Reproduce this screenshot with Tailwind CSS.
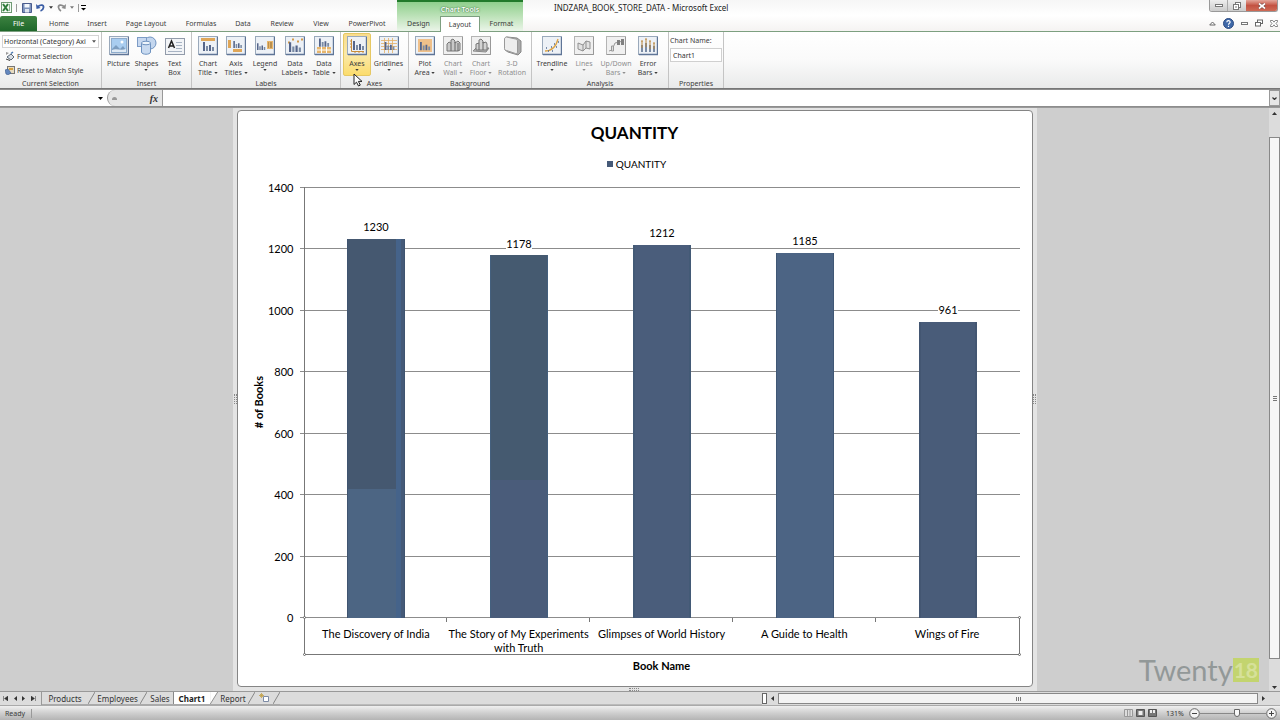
<!DOCTYPE html>
<html lang="en">
<head>
<meta charset="utf-8">
<meta name="viewport" content="width=device-width, initial-scale=1">
<title>INDZARA_BOOK_STORE_DATA - Microsoft Excel</title>
<script src="https://cdn.jsdelivr.net/npm/@tailwindcss/browser@4"></script>
</head>
<body class="flex h-screen flex-col overflow-hidden bg-[#cecece] font-['Noto_Sans','Open_Sans',sans-serif] text-[7px] leading-[9px] text-[#3c3c3c]">

<!-- Shared icon shapes -->
<svg class="hidden" aria-hidden="true">
  <defs>
    <linearGradient id="tile" x1="0" y1="0" x2="1" y2="1"><stop offset="0" stop-color="#fff"/><stop offset="1" stop-color="#dfe6ee"/></linearGradient>
    <linearGradient id="blue" x1="0" y1="0" x2="1" y2="1"><stop offset="0" stop-color="#eaf2fb"/><stop offset="1" stop-color="#7fa3d0"/></linearGradient>
  </defs>
  <symbol id="frame" viewBox="0 0 20 20"><rect x=".5" y=".5" width="19" height="18" fill="#edf1f6" stroke="#9aa9bb"/><path d="M1 18.500h18.500V1" fill="none" stroke="#5f7597" stroke-width="1.400"/></symbol>
  <symbol id="gframe" viewBox="0 0 20 20"><rect x=".5" y=".5" width="19" height="18" fill="#f0f0f0" stroke="#b4b4b4"/><path d="M1 18.500h18.500V1" fill="none" stroke="#999"/></symbol>
  <symbol id="bars" viewBox="0 0 12 9"><path d="M0 9V0h2v9zM6 9V3h2v6z" fill="#55658a"/><path d="M3 9V4h2v5zM9 9V5h2v4z" fill="#7a8ba5"/></symbol>
  <symbol id="caret" viewBox="0 0 5 3"><path d="M0 0h5L2.500 3z" fill="currentColor"/></symbol>
</svg>

<header class="flex h-8 shrink-0 border-b border-[#7d9f80] bg-linear-to-b from-[#f6f6f6] via-white to-[#f5f3f2]">
  <div class="flex w-[397px] shrink-0 flex-col justify-between">
    <!-- Quick access toolbar -->
    <div class="flex h-[15px] items-center gap-1 pl-px">
      <svg class="size-[11px]" viewBox="0 0 11 11"><rect x=".5" y=".5" width="10" height="10" fill="#f3faf3" stroke="#6f9a74"/><path d="M2 2l5 7M7 2L2 9" stroke="#2f7c3b" stroke-width="2"/><path d="M8.500 2v7" stroke="#8fb593"/></svg>
      <span class="h-2 w-px bg-[#999]"></span>
      <button aria-label="Save" class="ml-px"><svg class="size-[10px]" viewBox="0 0 10 10"><path d="M.5.5h9v9h-9z" fill="#7d93bd" stroke="#4b5c8c"/><path d="M2.500 1h5v3.500h-5z" fill="#f4f7fb"/><path d="M3 6h4v3.500H3z" fill="#dfe5ef"/></svg></button>
      <button aria-label="Undo" class="flex items-center gap-1 text-[#333]"><svg class="h-[9px] w-[9px]" viewBox="0 0 9 9"><path d="M2 3.500C5 1 8 2 7.500 4.500 7.200 6.500 6 7.500 4.500 8" fill="none" stroke="#3a5da5" stroke-width="1.700"/><path d="M0 1l.5 5L4.500 5z" fill="#3a5da5"/></svg><svg class="h-[3px] w-1"><use href="#caret"/></svg></button>
      <button aria-label="Redo" class="flex items-center gap-1 text-[#777]"><svg class="h-[9px] w-[9px]" viewBox="0 0 9 9"><path d="M7 3.500C4 1 1 2 1.500 4.500 1.700 6 2.500 7 4 8" fill="none" stroke="#8a8a8a" stroke-width="1.700"/><path d="M9 1l-.5 5L4.500 5z" fill="#8a8a8a"/></svg><svg class="h-[3px] w-1"><use href="#caret"/></svg></button>
      <span class="h-2 w-px bg-[#999]"></span>
      <button aria-label="Customize Quick Access Toolbar" class="-ml-[2px] text-black"><svg class="h-[6px] w-[5px]" viewBox="0 0 5 6"><path d="M0 .5h5" stroke="currentColor"/><path d="M0 3h5L2.500 5.500z" fill="currentColor"/></svg></button>
    </div>
    <nav class="flex h-[15px] text-center leading-[15px]">
      <button class="w-[37px] rounded-t-[2px] bg-linear-to-b from-[#3c8240] to-[#1e672a] text-white">File</button>
      <button class="w-11">Home</button>
      <button class="w-8">Insert</button>
      <button class="w-[66px]">Page Layout</button>
      <button class="w-11">Formulas</button>
      <button class="w-10">Data</button>
      <button class="w-[38px]">Review</button>
      <button class="w-10">View</button>
      <button class="w-[52px]">PowerPivot</button>
    </nav>
  </div>
  <!-- Contextual tab group -->
  <div class="-mb-px flex w-[126px] shrink-0 flex-col justify-between border-t-2 border-[#217a2b] bg-linear-to-b from-[#8fcf8d] via-[#bfe3bb] to-[#eef6ec]">
    <div class="pt-[3px] text-center font-semibold text-white [text-shadow:0_0_1px_#3e7a40,0_0_2px_#3e7a40]">Chart Tools</div>
    <nav class="flex h-4 text-center leading-[15px]">
      <button class="w-[43px] border-b border-[#7d9f80]">Design</button>
      <button class="w-10 border border-b-0 border-[#7d9f80] bg-white leading-[13px]">Layout</button>
      <button class="w-[43px] border-b border-[#7d9f80]">Format</button>
    </nav>
  </div>
  <h1 class="grow pt-[3px] pl-[31px] text-[8px] leading-[10px] text-[#222]">INDZARA_BOOK_STORE_DATA - Microsoft Excel</h1>
  <div class="flex flex-col items-end justify-between pr-[2px]">
    <div class="flex h-[12px] overflow-hidden rounded-b-[3px] border border-t-0 border-[#999]">
      <button aria-label="Minimize" class="flex w-[18px] items-center justify-center border-r border-[#aaa] bg-linear-to-b from-[#eee] to-[#ccc]"><svg class="h-[3px] w-2" viewBox="0 0 8 3"><rect x=".5" y=".5" width="7" height="2" fill="#fff" stroke="#777"/></svg></button>
      <button aria-label="Restore" class="flex w-[18px] items-center justify-center bg-linear-to-b from-[#eee] to-[#ccc]"><svg class="size-2" viewBox="0 0 8 8"><rect x="2.500" y=".5" width="5" height="5" fill="#fff" stroke="#777"/><rect x=".5" y="2.500" width="5" height="5" fill="#fff" stroke="#777"/><path d="M2 4.500h2v1H2z" fill="#777"/></svg></button>
      <button aria-label="Close" class="flex w-[31px] items-center justify-center bg-linear-to-b from-[#e3a79c] via-[#c35242] to-[#cf6a55]"><svg class="h-[6px] w-2" viewBox="0 0 8 6"><path d="M1 .5l6 5M7 .5l-6 5" stroke="#7a4a44" stroke-width="3"/><path d="M1 .5l6 5M7 .5l-6 5" stroke="#fff" stroke-width="1.700"/></svg></button>
    </div>
    <div class="flex h-4 items-center gap-[7px]">
      <button aria-label="Minimize the Ribbon"><svg class="h-[5px] w-[7px]" viewBox="0 0 7 5"><path d="M.7 4L3.500 1l2.800 3z" fill="#fff" stroke="#666"/></svg></button>
      <button aria-label="Help"><svg class="size-[11px]" viewBox="0 0 11 11"><circle cx="5.500" cy="5.500" r="5" fill="#3f68a8" stroke="#2c4b80"/><path d="M3.800 4.200C3.900 2 7.300 2.200 7.100 4.300 7 5.300 5.500 5.300 5.500 6.800M5.500 7.700v1.200" fill="none" stroke="#fff" stroke-width="1.200"/></svg></button>
      <button aria-label="Minimize Window"><svg class="h-[3px] w-[7px]" viewBox="0 0 7 3"><rect x=".5" y=".5" width="6" height="2" fill="#fff" stroke="#777"/></svg></button>
      <button aria-label="Restore Window"><svg class="size-2" viewBox="0 0 8 8"><rect x="2.500" y="1" width="5" height="3.500" fill="#fff" stroke="#666"/><rect x=".5" y="3.500" width="5" height="3.500" fill="#fff" stroke="#666"/></svg></button>
      <button aria-label="Close Window"><svg class="h-[7px] w-2" viewBox="0 0 8 7"><path d="M.5.5h2.200L4 2.200 5.300.5h2.200v1.200L6 3.500l1.500 1.800v1.200H5.300L4 4.800 2.700 6.500H.5V5.300L2 3.500.5 1.700z" fill="#fff" stroke="#666" stroke-width=".8"/></svg></button>
    </div>
  </div>
</header>

<!-- Ribbon -->
<section class="flex h-[57px] shrink-0 border-b border-[#777] bg-linear-to-b from-white via-[#fafafa] to-[#e9eaea] text-center">
  <div class="flex w-[102px] flex-col justify-between border-r border-[#c4c4c4] pt-[3px]">
    <div class="flex flex-col gap-[2px] px-[2px] text-left">
      <div class="grid items-center">
        <select aria-label="Chart element" class="col-start-1 row-start-1 h-[13px] w-full appearance-none border border-[#d4d4d4] bg-white pl-px leading-[11px] text-[#333]"><option>Horizontal (Category) Axi</option></select>
        <svg class="pointer-events-none col-start-1 row-start-1 mr-[3px] h-[3px] w-1 justify-self-end text-[#555]"><use href="#caret"/></svg>
      </div>
      <button class="flex h-3 items-center gap-[2px] pl-[3px]"><svg class="size-[10px]" viewBox="0 0 10 10"><path d="M1 1l3 1-3 2z" fill="#999"/><path d="M2 6l4-3 3 3-3 3z" fill="#d8dee5" stroke="#596878"/><path d="M1 8l4 1.500" stroke="#444"/><path d="M6 2.500l2-1.500" stroke="#4676b0" stroke-width="1.500"/></svg>Format Selection</button>
      <button class="flex h-3 items-center gap-[2px] pl-[3px]"><svg class="size-[10px]" viewBox="0 0 10 10"><rect x="2.500" y="1.500" width="7" height="7" fill="#e8dcc0" stroke="#777"/><path d="M4 3h4v2H4z" fill="#d7a13e"/><path d="M0 5l3-1 3 4-3 2-2-1z" fill="#6387be" stroke="#3e5a8a" stroke-width=".6"/></svg>Reset to Match Style</button>
    </div>
    <div>Current Selection</div>
  </div>

  <div class="flex w-[90px] flex-col justify-between border-r border-[#c4c4c4] pt-1">
    <div class="flex justify-center">
      <button class="flex w-7 flex-col items-center gap-[3px]"><svg class="size-5" viewBox="0 0 20 20"><use href="#frame"/><rect x="2.500" y="2.500" width="15" height="14" fill="#a9cdf0" stroke="#8eaccc"/><circle cx="13" cy="6" r="1.500" fill="#fff"/><path d="M3 13l4-4 4 4 3-3 3 4v2H3z" fill="#7c9dc0"/><path d="M3 14c4-2 9 1 14-1v3H3z" fill="#dfeaf5"/></svg>Picture</button>
      <button class="flex w-7 flex-col items-center gap-[3px]"><svg class="size-5" viewBox="0 0 20 20"><circle cx="13" cy="7" r="6" fill="#c3d6ee" stroke="#6f93c0"/><rect x=".5" y="1.500" width="9" height="9" fill="#c8d9f0" stroke="#7d9cc6"/><path d="M4.500 7v9c0 3 9 3 9 0V7z" fill="#c8daf0" stroke="#6f93c0"/><ellipse cx="9" cy="7" rx="4.500" ry="1.800" fill="#eef5fc" stroke="#6f93c0"/></svg><span class="flex flex-col items-center gap-px">Shapes<svg class="h-[2px] w-1"><use href="#caret"/></svg></span></button>
      <button class="flex w-7 flex-col items-center gap-[3px]"><svg class="size-5" viewBox="0 0 20 20"><rect x=".5" y="2.500" width="19" height="16" fill="#f2f4f7" stroke="#929baa"/><path d="M3.500 12L6.500 5l3 7M4.500 10h4" fill="none" stroke="#222" stroke-width="1.500"/><path d="M11 6.500h6M11 9.500h6M11 12.500h6M3 15.500h14" stroke="#a8b4c4"/></svg><span>Text<br>Box</span></button>
    </div>
    <div>Insert</div>
  </div>

  <div class="flex w-[149px] flex-col justify-between border-r border-[#c4c4c4] pt-1">
    <div class="flex justify-center">
      <button class="flex w-7 flex-col items-center gap-[3px]"><svg class="size-5" viewBox="0 0 20 20"><use href="#frame"/><path d="M3 2h14v3H3z" fill="#dfa658"/><use href="#bars" x="5" y="6" width="12" height="9"/></svg><span class="whitespace-nowrap">Chart<br>Title <svg class="inline h-[2px] w-1"><use href="#caret"/></svg></span></button>
      <button class="flex w-7 flex-col items-center gap-[3px]"><svg class="size-5" viewBox="0 0 20 20"><use href="#frame"/><path d="M2 4h3v8H2zM7 13h9v3H7z" fill="#dfa658"/><use href="#bars" x="7" y="5" width="10" height="7"/></svg><span class="whitespace-nowrap">Axis<br>Titles <svg class="inline h-[2px] w-1"><use href="#caret"/></svg></span></button>
      <button class="flex w-[30px] flex-col items-center gap-[3px]"><svg class="size-5" viewBox="0 0 20 20"><use href="#frame"/><path d="M12 5h6v8h-6z" fill="#e8b66c"/><path d="M13 7h1M15 7h2M13 9h1M15 9h2M13 11h1M15 11h2" stroke="#8b6a35"/><use href="#bars" x="2" y="7" width="9" height="7"/></svg><span class="flex flex-col items-center gap-px">Legend<svg class="h-[2px] w-1"><use href="#caret"/></svg></span></button>
      <button class="flex w-[30px] flex-col items-center gap-[3px]"><svg class="size-5" viewBox="0 0 20 20"><use href="#frame"/><path d="M3 6.500h2M7 3.500h2M12 5.500h2M16 3.500h2" stroke="#d39a4a" stroke-width="2"/><use href="#bars" x="4" y="6" width="13" height="10"/></svg><span class="whitespace-nowrap">Data<br>Labels <svg class="inline h-[2px] w-1"><use href="#caret"/></svg></span></button>
      <button class="flex w-7 flex-col items-center gap-[3px]"><svg class="size-5" viewBox="0 0 20 20"><use href="#frame"/><use href="#bars" x="5" y="2" width="11" height="9"/><path d="M3 11h14v6H3z" fill="#e8b66c"/><path d="M3 14h14M7.500 11v6M12.500 11v6" stroke="#fff"/></svg><span class="whitespace-nowrap">Data<br>Table <svg class="inline h-[2px] w-1"><use href="#caret"/></svg></span></button>
    </div>
    <div>Labels</div>
  </div>

  <div class="flex w-[68px] flex-col justify-between border-r border-[#c4c4c4] pt-px">
    <div class="flex justify-center">
      <button class="flex h-[43px] w-7 flex-col items-center gap-[3px] rounded-[2px] border border-[#e6c863] bg-linear-to-b from-[#f9dc8c] via-[#fbe9a8] to-[#fbdc6c] pt-[2px]"><svg class="size-5" viewBox="0 0 20 20"><use href="#frame"/><path d="M4.500 3v12.500H17" fill="none" stroke="#c98d3a"/><path d="M3 5h1M3 8h1M3 11h1M8 16v1M12 16v1M16 16v1" stroke="#c98d3a"/><use href="#bars" x="6" y="5" width="12" height="9"/></svg><span class="flex flex-col items-center gap-px">Axes<svg class="h-[2px] w-1"><use href="#caret"/></svg></span></button>
      <button class="flex w-[35px] flex-col items-center gap-[3px] pt-[3px]"><svg class="size-5" viewBox="0 0 20 20"><use href="#frame"/><path d="M2 4.500h16M2 7.500h16M2 10.500h16M2 13.500h16M5.500 2v15M9.500 2v15M13.500 2v15" stroke="#e3b064" stroke-width=".8"/><use href="#bars" x="5" y="6" width="12" height="8"/></svg><span class="flex flex-col items-center gap-px">Gridlines<svg class="h-[2px] w-1"><use href="#caret"/></svg></span></button>
    </div>
    <div>Axes</div>
  </div>

  <div class="flex w-[123px] flex-col justify-between border-r border-[#c4c4c4] pt-1">
    <div class="flex justify-center">
      <button class="flex w-7 flex-col items-center gap-[3px]"><svg class="size-5" viewBox="0 0 20 20"><use href="#frame"/><path d="M3 3h14v13H3z" fill="#efc08a"/><use href="#bars" x="5" y="5" width="11" height="10"/></svg><span class="whitespace-nowrap">Plot<br>Area <svg class="inline h-[2px] w-1"><use href="#caret"/></svg></span></button>
      <button disabled class="flex w-7 flex-col items-center gap-[3px] text-[#8e8e8e]"><svg class="size-5" viewBox="0 0 20 20"><use href="#gframe"/><path d="M4 15V8l2-2 2 1V4l2-1 2 2v2l3-2 2 2v7l-2 1z" fill="#c9c9c9" stroke="#777"/><path d="M8 7v8M12 6v9M15 7v8" stroke="#666"/></svg><span class="whitespace-nowrap">Chart<br>Wall <svg class="inline h-[2px] w-1"><use href="#caret"/></svg></span></button>
      <button disabled class="flex w-7 flex-col items-center gap-[3px] text-[#8e8e8e]"><svg class="size-5" viewBox="0 0 20 20"><use href="#gframe"/><path d="M2 15l3-3h13l-3 4z" fill="#bbb" stroke="#888"/><path d="M5 14V8l3-1V4l2-1 2 2v2l3-1 1 2v6z" fill="#d3d3d3" stroke="#777"/><path d="M8 7v7M12 6v8" stroke="#666"/></svg><span class="whitespace-nowrap">Chart<br>Floor <svg class="inline h-[2px] w-1"><use href="#caret"/></svg></span></button>
      <button disabled class="flex w-[34px] flex-col items-center gap-[3px] text-[#8e8e8e]"><svg class="size-5" viewBox="0 0 20 20"><path d="M3 3c0-1 1-2 2-2l10 1 4 3v11l-3 3-10-3-3-2z" fill="#aaa" stroke="#888"/><path d="M2.500 3c0-1 1-2 2-2l9 2c1 0 2 1 2 2v11c0 1-1 2-2 1.500l-9-3c-1 0-2-1-2-2z" fill="#ededed" stroke="#999"/></svg><span>3-D<br>Rotation</span></button>
    </div>
    <div>Background</div>
  </div>

  <div class="flex w-[137px] flex-col justify-between border-r border-[#c4c4c4] pt-1">
    <div class="flex pl-[2px]">
      <button class="flex w-9 flex-col items-center gap-[3px]"><svg class="size-5" viewBox="0 0 20 20"><use href="#frame"/><path d="M3 15c7 0 11-4 13-12" fill="none" stroke="#dca548" stroke-width="1.300"/><path d="M4 12h1M6 15h1M9 11h1M10 15h1M12 8h1M14 11h1M16 6h1" stroke="#536b93" stroke-width="1.300"/></svg><span class="flex flex-col items-center gap-px">Trendline<svg class="h-[2px] w-1"><use href="#caret"/></svg></span></button>
      <button disabled class="flex w-7 flex-col items-center gap-[3px] text-[#8e8e8e]"><svg class="size-5" viewBox="0 0 20 20"><use href="#gframe"/><path d="M4 7l5 2 3-4 4 1v7l-4-1-3 3-5-2zM9 9v6M12 5v7" fill="#e2e2e2" stroke="#909090"/></svg><span class="flex flex-col items-center gap-px">Lines<svg class="h-[2px] w-1"><use href="#caret"/></svg></span></button>
      <button disabled class="flex w-9 flex-col items-center gap-[3px] text-[#8e8e8e]"><svg class="size-5" viewBox="0 0 20 20"><use href="#gframe"/><path d="M3 15l3-1 3-7 4-1 4-1" fill="none" stroke="#999"/><path d="M5.500 10h2v5h-2z" fill="#ddd" stroke="#999"/><path d="M11 4h3v5h-3zM15 3h3v6h-3z" fill="#808080"/></svg><span class="whitespace-nowrap">Up/Down<br>Bars <svg class="inline h-[2px] w-1"><use href="#caret"/></svg></span></button>
      <button class="flex w-7 flex-col items-center gap-[3px]"><svg class="size-5" viewBox="0 0 20 20"><use href="#frame"/><path d="M3 9h2v7H3zM7 7h2v9H7zM11 9h2v7h-2zM15 10h2v6h-2z" fill="#7a8ba5"/><path d="M4 5v7M3 5h2M8 3v8M7 3h2M12 5v8M11 5h2M16 7v6M15 7h2" stroke="#b9863c"/></svg><span class="whitespace-nowrap">Error<br>Bars <svg class="inline h-[2px] w-1"><use href="#caret"/></svg></span></button>
    </div>
    <div>Analysis</div>
  </div>

  <div class="flex w-[55px] flex-col justify-between border-r border-[#c4c4c4] pt-1">
    <div class="flex flex-col gap-[3px] pl-px text-left">
      <label for="chart-name">Chart Name:</label>
      <input id="chart-name" value="Chart1" class="h-[14px] w-[52px] border border-[#d0d0d0] bg-white pl-[2px] text-[#333]">
    </div>
    <div>Properties</div>
  </div>
</section>

<!-- Formula bar -->
<section class="flex h-[18px] shrink-0 border-y border-[#8d8d8d] bg-white">
  <div class="flex w-[107px] items-center justify-end bg-white pr-1 text-black">
    <input aria-label="Name box" class="w-24 min-w-0 bg-white"><svg class="h-[3px] w-[5px]"><use href="#caret"/></svg>
  </div>
  <div class="flex w-14 items-center justify-between rounded-l-full border-r border-l border-[#999] bg-[#e6e6e6] px-1">
    <span class="h-[3px] w-[5px] rounded-t-full bg-[#999]"></span>
    <button aria-label="Insert Function" class="font-['Liberation_Serif',serif] text-[10px] font-bold text-[#333] italic">fx</button>
  </div>
  <input aria-label="Formula bar" class="min-w-0 grow bg-white">
  <button aria-label="Expand Formula Bar" class="flex w-[11px] items-center justify-center border border-[#999] bg-[#e6e6e6]"><svg class="h-[3px] w-[5px]" viewBox="0 0 5 3"><path d="M.5.5l2 2 2-2" fill="none" stroke="#333" stroke-width="1.200"/></svg></button>
</section>

<!-- Workspace -->
<main class="flex min-h-0 grow border-t border-[#999]">
  <div class="flex min-w-0 grow justify-center bg-[#cecece]">
    <section class="flex w-[804px] border-x-4 border-b-4 border-[#e4e4e4] bg-[#e4e4e4] pt-[2px] font-[Lato,sans-serif] text-[11px] leading-[14px] text-black">
      <div class="relative flex w-full flex-col rounded-[4px] border border-[#858585] bg-white">
        <span class="absolute bottom-[-5px] left-[391px] h-[3px] w-[10px] border-y border-dotted border-[#888]"></span>
        <span class="absolute top-[283px] left-[-4px] h-[10px] w-[3px] border-x border-dotted border-[#888]"></span>
        <span class="absolute top-[283px] right-[-4px] h-[10px] w-[3px] border-x border-dotted border-[#888]"></span>

        <h2 class="pt-2 text-center text-[17px] leading-7 font-bold">QUANTITY</h2>
        <div class="mt-[10px] flex items-center justify-center gap-[3px] pl-1 text-[10px]"><span class="size-[6px] bg-[#465a78]"></span>QUANTITY</div>

        <div class="mt-[16px] mr-3 flex min-h-0 grow">
          <div class="flex w-[66px] shrink-0">
            <div class="flex w-7 items-center justify-end"><span class="rotate-180 font-bold [writing-mode:vertical-rl]"># of Books</span></div>
            <div class="flex w-7 flex-col justify-between text-right *:h-px *:leading-px">
              <div>1400</div><div>1200</div><div>1000</div><div>800</div><div>600</div><div>400</div><div>200</div><div>0</div>
            </div>
            <div class="ml-auto flex w-1 flex-col justify-between *:h-px *:bg-[#8c8c8c]">
              <i></i><i></i><i></i><i></i><i></i><i></i><i></i><i></i>
            </div>
          </div>
          <div class="grid min-w-0 grow border-l border-[#777]">
            <div class="col-start-1 row-start-1 flex flex-col justify-between *:h-px *:bg-[#8c8c8c]">
              <i></i><i></i><i></i><i></i><i></i><i></i><i></i><i></i>
            </div>
            <div class="col-start-1 row-start-1 grid grid-cols-5 text-center">
              <div class="flex flex-col items-center justify-end"><span class="mb-[5px] bg-white">1230</span><div class="flex w-2/5 border-x border-[#3f5470] bg-[#4c6583]" style="height:87.860%"><div class="h-[66%] grow bg-[#455870]"></div><div class="w-[5px] bg-[#45638a]"></div><div class="w-[3px] bg-[#455a78]"></div></div></div>
              <div class="flex flex-col items-center justify-end"><span class="mb-[5px] leading-[13px] bg-white">1178</span><div class="w-2/5 border-x border-[#44607e] bg-[#4a5c7a]" style="height:84.140%"><div class="h-[62%] bg-[#455a70]"></div></div></div>
              <div class="flex flex-col items-center justify-end"><span class="mb-[5px] bg-white">1212</span><div class="w-2/5 border-x-2 border-[#435a76] bg-[#4a5d7b]" style="height:86.570%"></div></div>
              <div class="flex flex-col items-center justify-end"><span class="mb-[5px] bg-white">1185</span><div class="w-2/5 border-x border-[#3f5775] bg-[#4c6484]" style="height:84.640%"></div></div>
              <div class="flex flex-col items-center justify-end"><span class="mb-[5px] bg-white">961</span><div class="w-2/5 border-x-2 border-[#435672] bg-[#495c79]" style="height:68.640%"></div></div>
            </div>
          </div>
        </div>

        <!-- Selected category axis -->
        <div class="relative mr-3 ml-[66px] grid h-[37px] grid-cols-5 border border-t-0 border-[#777] text-center *:pt-[9px]">
          <div class="bg-[linear-gradient(#777,#777)] bg-[length:1px_4px] bg-[top_right] bg-no-repeat">The Discovery of India</div>
          <div class="bg-[linear-gradient(#777,#777)] bg-[length:1px_4px] bg-[top_right] bg-no-repeat">The Story of My Experiments with Truth</div>
          <div class="bg-[linear-gradient(#777,#777)] bg-[length:1px_4px] bg-[top_right] bg-no-repeat">Glimpses of World History</div>
          <div class="bg-[linear-gradient(#777,#777)] bg-[length:1px_4px] bg-[top_right] bg-no-repeat">A Guide to Health</div>
          <div>Wings of Fire</div>
          <i class="absolute -top-[2px] -left-[2px] size-[3px] rounded-full border border-[#666] bg-white p-0!"></i>
          <i class="absolute -top-[2px] -right-[2px] size-[3px] rounded-full border border-[#666] bg-white p-0!"></i>
          <i class="absolute -bottom-[2px] -left-[2px] size-[3px] rounded-full border border-[#666] bg-white p-0!"></i>
          <i class="absolute -right-[2px] -bottom-[2px] size-[3px] rounded-full border border-[#666] bg-white p-0!"></i>
        </div>
        <div class="mr-3 ml-[66px] pt-1 pb-[13px] text-center font-bold">Book Name</div>
      </div>
    </section>
  </div>
  <!-- Vertical scroll bar -->
  <div class="flex w-[11px] shrink-0 flex-col items-center bg-[#dcdcdc]">
    <button aria-label="Scroll up" class="flex h-[29px] items-start pt-1"><svg class="h-[3px] w-[5px] rotate-180 text-[#333]"><use href="#caret"/></svg></button>
    <div class="flex w-full grow flex-col items-center justify-center gap-px border border-[#888] bg-[#f6f6f6] *:h-px *:w-1 *:bg-[#777]"><i></i><i></i><i></i></div>
    <button aria-label="Scroll down" class="flex h-[32px] items-end pb-[2px]"><svg class="h-[3px] w-[5px] text-[#333]"><use href="#caret"/></svg></button>
  </div>
</main>

<!-- Sheet tabs and horizontal scroll bar -->
<section class="flex h-[14px] shrink-0 items-center border-t border-[#999] bg-[#dcdcdc] text-[8px]">
  <div class="flex h-full w-[42px] items-center justify-around border-r border-[#999] pr-[2px]">
    <button aria-label="First sheet"><svg class="h-[5px] w-[5px]" viewBox="0 0 5 5"><path d="M.5 0v5M5 0v5L1.500 2.500z" fill="#333" stroke="#333" stroke-width=".5"/></svg></button>
    <button aria-label="Previous sheet"><svg class="h-[5px] w-[3px]" viewBox="0 0 3 5"><path d="M3 0v5L0 2.500z" fill="#333"/></svg></button>
    <button aria-label="Next sheet"><svg class="h-[5px] w-[3px]" viewBox="0 0 3 5"><path d="M0 0v5l3-2.500z" fill="#333"/></svg></button>
    <button aria-label="Last sheet"><svg class="h-[5px] w-[5px]" viewBox="0 0 5 5"><path d="M4.500 0v5M0 0v5l3.500-2.500z" fill="#333" stroke="#333" stroke-width=".5"/></svg></button>
  </div>
  <nav class="flex h-full items-center border-b border-[#aaa] text-center text-[#333]">
    <button class="w-[46px]">Products</button>
    <svg class="h-3 w-[7px]" viewBox="0 0 7 12"><path d="M0 12L7 0" stroke="#888"/></svg>
    <button class="w-[45px]">Employees</button>
    <svg class="h-3 w-[7px]" viewBox="0 0 7 12"><path d="M0 12L7 0" stroke="#888"/></svg>
    <button class="w-[26px]">Sales</button>
    <button class="h-full w-[37px] border-l border-[#888] bg-white font-bold text-[#222]">Chart1</button>
    <svg class="h-full w-[8px]" viewBox="0 0 8 13"><path d="M0 0h8L0 13z" fill="#fff"/><path d="M0 13L8 0" stroke="#888"/></svg>
    <button class="w-[30px]">Report</button>
    <svg class="h-3 w-[7px]" viewBox="0 0 7 12"><path d="M0 12L7 0" stroke="#888"/></svg>
    <button aria-label="Insert Worksheet" class="flex w-[18px] justify-center"><svg class="size-[10px]" viewBox="0 0 10 10"><path d="M4.500 3.500h5v5h-5z" fill="#fff" stroke="#7d8ba5"/><path d="M1 1l3 3M4 1L1 4M2.500 0v5M0 2.500h5" stroke="#c1a045" stroke-width=".8"/></svg></button>
    <svg class="h-3 w-[7px]" viewBox="0 0 7 12"><path d="M0 12L7 0" stroke="#888"/></svg>
  </nav>
  <div class="h-full grow border-b border-[#bbb]"></div>
  <div class="flex h-full w-[518px] items-center text-[#333]">
    <span class="h-[11px] w-[5px] border border-[#666] bg-white"></span>
    <button aria-label="Scroll left" class="ml-1"><svg class="h-[5px] w-[3px]" viewBox="0 0 3 5"><path d="M3 0v5L0 2.500z" fill="#333"/></svg></button>
    <div class="ml-1 flex h-[11px] grow items-center justify-center gap-px border border-[#888] bg-[#f4f4f4] *:h-1 *:w-px *:bg-[#777]"><i></i><i></i><i></i></div>
    <button aria-label="Scroll right" class="mr-[15px] ml-1"><svg class="h-[5px] w-[3px]" viewBox="0 0 3 5"><path d="M0 0v5l3-2.500z" fill="#333"/></svg></button>
  </div>
</section>

<!-- Status bar -->
<footer class="flex h-[15px] shrink-0 items-center border-t border-[#aaa] bg-linear-to-b from-[#f0f0f0] via-[#cfcfcf] to-[#b4b4b4]">
  <span class="w-8 border-r border-[#999] pl-[5px]">Ready</span>
  <div class="ml-auto flex items-center">
    <div class="flex items-center gap-[3px]">
      <button aria-label="Normal view"><svg class="h-2 w-[9px]" viewBox="0 0 9 8"><path d="M.5.5h8v7h-8zM3.500 0v8M6 0v8" fill="#ddd" stroke="#999"/></svg></button>
      <button aria-label="Page layout view"><svg class="h-2 w-[9px]" viewBox="0 0 9 8"><path d="M.5.5h8v7h-8z" fill="#777" stroke="#555"/><path d="M2.500 2h4v4h-4z" fill="#eee"/></svg></button>
      <button aria-label="Page break preview"><svg class="h-2 w-[9px]" viewBox="0 0 9 8"><path d="M.5.5h8v7h-8z" fill="#777" stroke="#555"/><path d="M2 1h2v3H2zM5 1h2v3H5z" fill="#eee"/></svg></button>
    </div>
    <button class="ml-[8px] w-5 text-[#333]">131%</button>
    <button aria-label="Zoom out" class="ml-1"><svg class="size-[11px]" viewBox="0 0 11 11"><circle cx="5.500" cy="5.500" r="4.800" fill="#f4f4f4" stroke="#666"/><path d="M3 5.500h5" stroke="#444"/></svg></button>
    <input type="range" aria-label="Zoom" min="0" max="100" value="56" class="h-2 w-[66px] appearance-none bg-[linear-gradient(#888,#888)] bg-[length:100%_1px] bg-center bg-no-repeat [&::-webkit-slider-thumb]:h-2 [&::-webkit-slider-thumb]:w-[6px] [&::-webkit-slider-thumb]:appearance-none [&::-webkit-slider-thumb]:rounded-b-[3px] [&::-webkit-slider-thumb]:border [&::-webkit-slider-thumb]:border-[#666] [&::-webkit-slider-thumb]:bg-[#f8f8f8]">
    <button aria-label="Zoom in" class="mr-[3px]"><svg class="size-[11px]" viewBox="0 0 11 11"><circle cx="5.500" cy="5.500" r="4.800" fill="#f4f4f4" stroke="#666"/><path d="M3 5.500h5M5.500 3v5" stroke="#444"/></svg></button>
  </div>
</footer>

<!-- Watermark over the workspace -->
<div class="pointer-events-none absolute right-[21px] bottom-[32px] flex items-center font-['Lato',sans-serif] text-[29px] leading-9 text-[#929898]">
  <span>Twenty</span><span class="bg-[#c3d46f] px-px text-[21px] leading-6 font-bold text-[#d6e19a]">18</span>
</div>

<!-- Mouse pointer -->
<svg class="pointer-events-none absolute top-[73px] left-[353px] h-[14px] w-[10px]" viewBox="0 0 10 14"><path d="M1 1v10.500l2.500-2.300L5.500 13l1.800-.9-1.900-3.700H9z" fill="#fff" stroke="#222"/></svg>
</body>
</html>
